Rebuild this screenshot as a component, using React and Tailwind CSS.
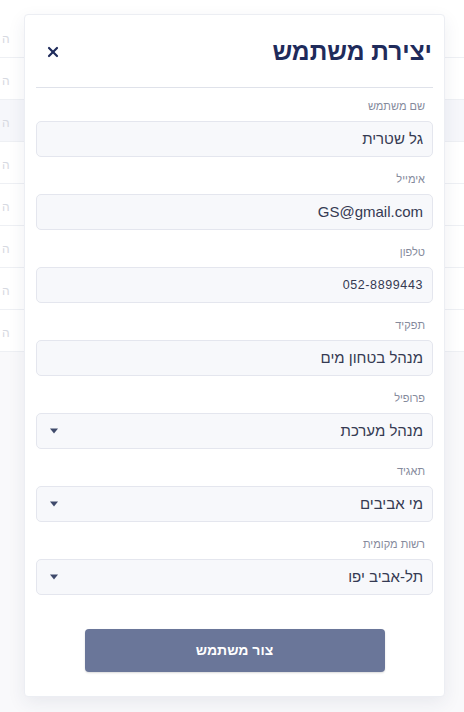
import { X } from 'lucide-react';

const fields = [
  { label: 'שם משתמש', value: 'גל שטרית' },
  { label: 'אימייל', value: 'GS@gmail.com', ltr: true },
  { label: 'טלפון', value: '052-8899443', phone: true },
  { label: 'תפקיד', value: 'מנהל בטחון מים' },
  { label: 'פרופיל', value: 'מנהל מערכת', select: true },
  { label: 'תאגיד', value: 'מי אביבים', select: true },
  { label: 'רשות מקומית', value: 'תל-אביב יפו', select: true },
];

const rows = [0, 1, 2, 3, 4, 5, 6, 7];

function Caret() {
  return (
    <svg width="10" height="6" viewBox="0 0 10 6" className="shrink-0">
      <path d="M1 0.5 H9 L5 5.5 Z" fill="#3f4a6b" />
    </svg>
  );
}

export default function App() {
  return (
    <div className="relative h-[712px] w-full overflow-hidden bg-[#f9f9fb]" style={{ fontFamily: '"Liberation Sans", "DejaVu Sans", sans-serif' }}>
      {/* table behind the modal */}
      <div className="bg-white pt-[16px]">
        {rows.map((r) => (
          <div
            key={r}
            className={`flex h-[42px] items-center border-b border-[#eef0f4] px-[2px] pt-[4px] text-[12px] text-[#d6d9e1] ${r === 2 ? 'bg-[#f6f7fb]' : ''}`}
          >
            <span>ה</span>
          </div>
        ))}
      </div>

      {/* modal */}
      <div dir="rtl" className="absolute left-[24px] top-[14px] w-[421px] h-[683px] rounded-[4px] border border-[#eceef3] bg-white px-[11px] pt-[23px] shadow-[0_6px_18px_rgba(40,50,90,0.08)]">
        <div className="flex items-center justify-between pr-[1px]">
          <h1 className="text-[24.5px] font-bold leading-[28px] text-[#1f2b5b]">יצירת משתמש</h1>
          <button className="ml-[9px] text-[#1f2b5b]">
            <X size={16} strokeWidth={3.2} />
          </button>
        </div>
        <div className="mt-[21px] h-px bg-[#dfe2ea]" />

        <div className="mt-[11px] flex flex-col gap-[15px]">
          {fields.map((f) => (
            <div key={f.label} className="flex flex-col gap-[8px]">
              <label className="pr-[8px] text-[11px] leading-[14px] text-[#858a9c]">{f.label}</label>
              <div className="flex h-[36px] items-center justify-between rounded-[5px] border border-[#e4e6ee] bg-[#f7f8fb] pl-[12px] pr-[9px]">
                <span
                  className={
                    f.phone
                      ? 'text-[12.5px] tracking-[0.6px] text-[#353a52]'
                      : 'text-[15px] text-[#353a52]'
                  }
                  dir={f.ltr || f.phone ? 'ltr' : 'rtl'}
                >
                  {f.value}
                </span>
                {f.select && <Caret />}
              </div>
            </div>
          ))}
        </div>

        <div className="mt-[34px] flex justify-center">
          <button className="h-[43px] w-[300px] rounded-[4px] bg-[#6a7699] text-[14px] font-bold text-white shadow-[0_1px_2px_rgba(0,0,0,0.15)]">
            צור משתמש
          </button>
        </div>
      </div>
    </div>
  );
}
